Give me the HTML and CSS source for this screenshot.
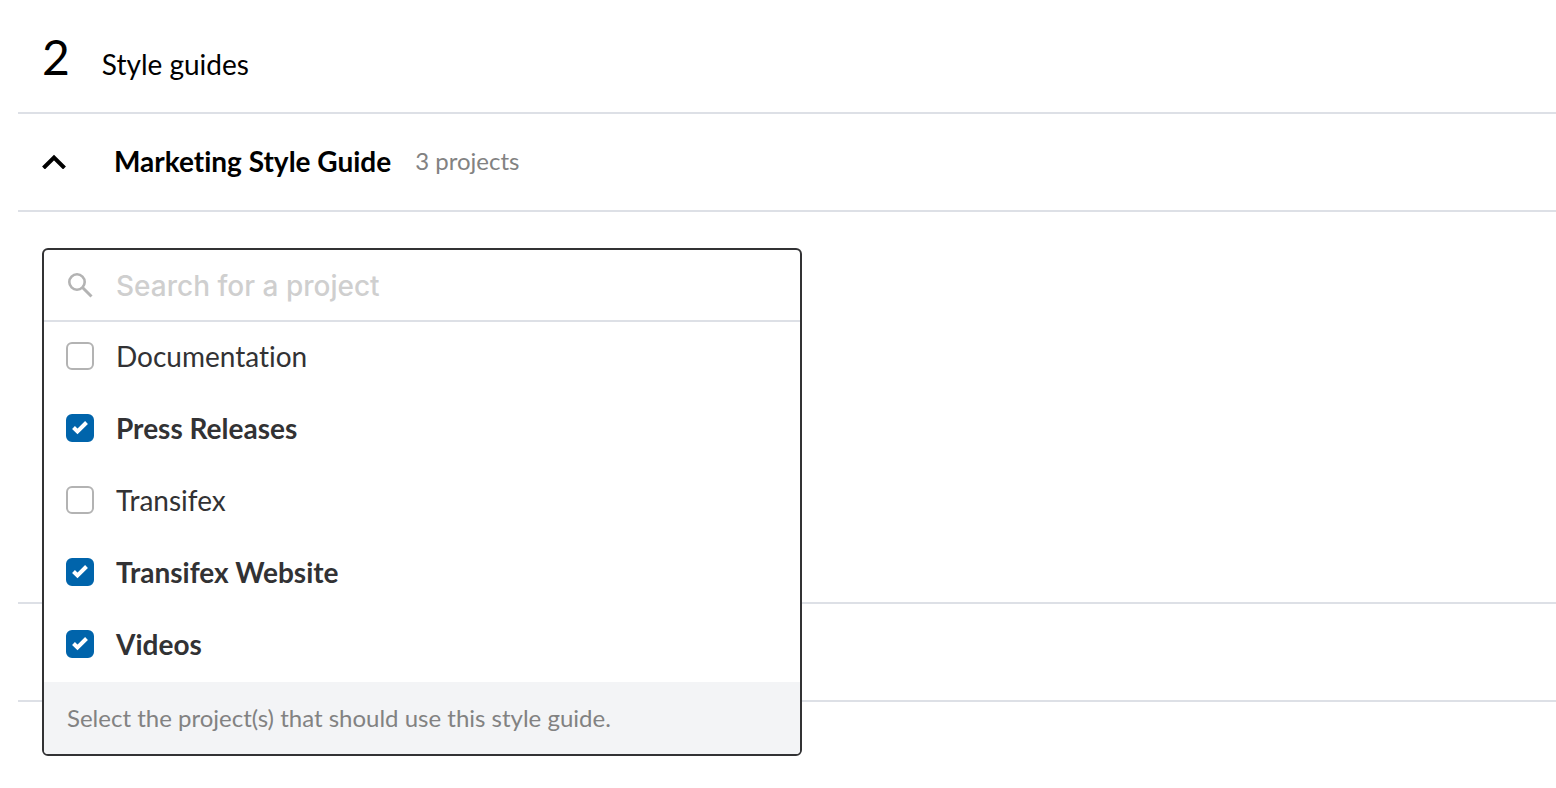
FILE: index.html
```html
<!DOCTYPE html>
<html lang="en">
<head>
<meta charset="utf-8">
<meta name="viewport" content="width=device-width, initial-scale=1">
<title>Style guides</title>
<link rel="stylesheet" href="styles.css">
</head>
<body>
<main class="guides">
  <header class="guides-header">
    <span class="guides-count">2</span>
    <h1 class="guides-title">Style guides</h1>
  </header>
  <section class="guide">
    <div class="guide-header">
      <button class="guide-toggle" type="button" aria-expanded="true" aria-label="Collapse Marketing Style Guide">
        <svg width="24" height="16" viewBox="0 0 24 16" fill="none" stroke="currentColor" stroke-width="4" aria-hidden="true"><path d="M1.500 15 12 4.500 22.500 15"/></svg>
      </button>
      <h2 class="guide-name">Marketing Style Guide</h2>
      <span class="guide-meta">3 projects</span>
    </div>
    <div class="guide-body">
      <form class="picker">
        <div class="picker-search">
          <svg width="26" height="26" viewBox="0 0 26 26" fill="none" stroke="currentColor" aria-hidden="true"><circle cx="9" cy="9" r="7.700" stroke-width="2.600"/><path d="m14.500 14.500 9 9" stroke-width="3"/></svg>
          <input class="picker-input" type="text" placeholder="Search for a project" aria-label="Search for a project">
        </div>
        <ul class="picker-list">
          <li><label class="option"><input class="option-box" type="checkbox"><span class="option-name">Documentation</span></label></li>
          <li><label class="option"><input class="option-box" type="checkbox" checked><span class="option-name">Press Releases</span></label></li>
          <li><label class="option"><input class="option-box" type="checkbox"><span class="option-name">Transifex</span></label></li>
          <li><label class="option"><input class="option-box" type="checkbox" checked><span class="option-name">Transifex Website</span></label></li>
          <li><label class="option"><input class="option-box" type="checkbox" checked><span class="option-name">Videos</span></label></li>
        </ul>
        <p class="picker-hint">Select the project(s) that should use this style guide.</p>
      </form>
    </div>
  </section>
  <section class="guide guide-collapsed"></section>
</main>
</body>
</html>
```
FILE: styles.css
```css
* {
  box-sizing: border-box;
}

body {
  margin: 0;
  min-height: 100vh;
  background: #fff;
  color: #000;
  font-family: Lato, "Open Sans", sans-serif;
  font-size: 28px;
  font-variant-ligatures: none;
  line-height: 36px;
}

h1, h2, p, ul {
  margin: 0;
  padding: 0;
  font-size: inherit;
  font-weight: 400;
}

.guides {
  min-height: 100vh;
  padding-left: 18px;
}

.guides-header {
  display: flex;
  align-items: baseline;
  gap: 32px;
  padding: 25px 24px 23px;
  border-bottom: 2px solid #dde0e6;
}

.guides-count {
  font-size: 48px;
  line-height: 64px;
}

.guide {
  border-bottom: 2px solid #dde0e6;
}

.guide-header {
  display: flex;
  align-items: center;
  min-height: 98px;
  padding: 0 24px 2px;
  border-bottom: 2px solid #dde0e6;
}

.guide-toggle {
  display: flex;
  margin-right: 48px;
  padding: 0;
  border: 0;
  background: none;
  color: #000;
}

.guide-name {
  margin-right: 24px;
  font-weight: 700;
}

.guide-meta {
  color: #828282;
  font-size: 24px;
}

.guide-body {
  position: relative;
  min-height: 390px;
}

.guide-collapsed {
  min-height: 98px;
}

.picker {
  position: absolute;
  top: 36px;
  left: 24px;
  z-index: 1;
  width: 760px;
  overflow: hidden;
  border: 2px solid #323234;
  border-radius: 6px;
  background: #fff;
  color: #323234;
}

.picker-search {
  display: flex;
  align-items: center;
  gap: 22px;
  height: 72px;
  padding: 2px 24px 0;
  border-bottom: 2px solid #dde0e6;
  color: #b3b3b3;
}

.picker-input {
  flex: 1;
  min-width: 0;
  padding: 0;
  border: 0;
  outline: 0;
  background: none;
  color: #323234;
  font: 500 28px/36px Inter, sans-serif;
}

.picker-input::placeholder {
  color: #cfcfcf;
  opacity: 1;
}

.picker-list {
  list-style: none;
}

.option {
  display: flex;
  align-items: center;
  gap: 22px;
  height: 72px;
  padding: 0 22px 4px;
}

.option-box {
  appearance: none;
  width: 28px;
  height: 28px;
  margin: 0;
  border: 2px solid #b3b3b3;
  border-radius: 6px;
  background: #fff;
}

.option-box:checked {
  border-color: #0064ab;
  background: #0064ab url("data:image/svg+xml,%3Csvg xmlns='http://www.w3.org/2000/svg' viewBox='0 0 24 24'%3E%3Cpath d='M5.500 11.500l4 4L18.500 6.500' fill='none' stroke='white' stroke-width='4'/%3E%3C/svg%3E") center / 24px 24px no-repeat;
}

.option-box:checked + .option-name {
  font-weight: 700;
}

.picker-hint {
  padding: 18px 23px;
  background: #f3f4f6;
  color: #828282;
  font-size: 24px;
}
```
